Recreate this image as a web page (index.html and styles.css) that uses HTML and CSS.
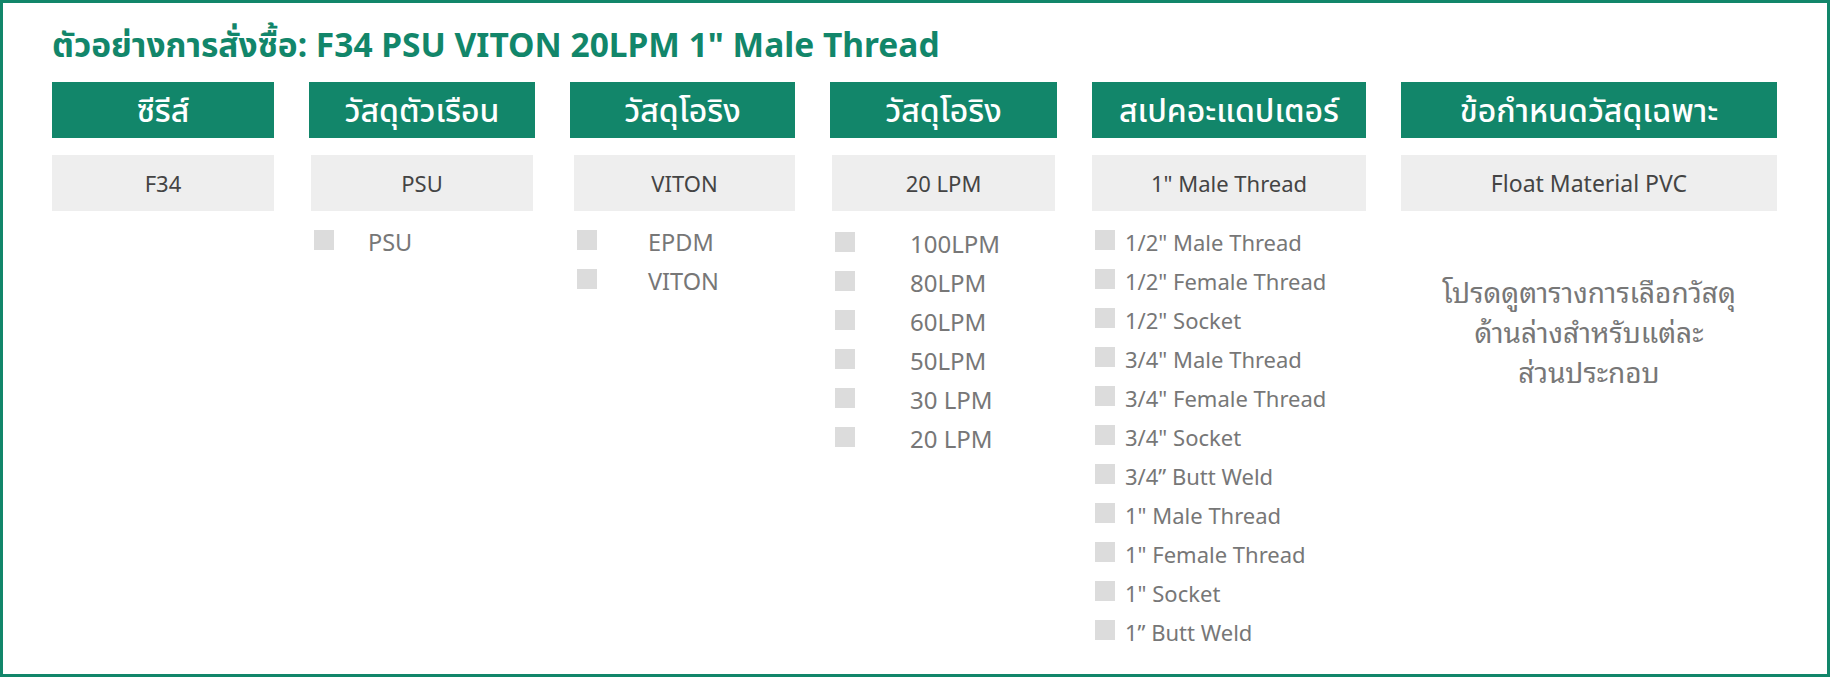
FILE: index.html
```
<!DOCTYPE html>
<html lang="th">
<head>
<meta charset="utf-8">
<title>ตัวอย่างการสั่งซื้อ</title>
<link rel="stylesheet" href="styles.css">
</head>
<body>
<div class="frame">
  <h1 class="title">ตัวอย่างการสั่งซื้อ: F34 PSU VITON 20LPM 1" Male Thread</h1>
  <div class="grid">
    <div class="col c1">
      <div class="head">ซีรีส์</div>
      <div class="val">F34</div>
    </div>
    <div class="col c2">
      <div class="head">วัสดุตัวเรือน</div>
      <div class="val">PSU</div>
      <ul class="opts">
        <li><span class="box"></span><span class="txt">PSU</span></li>
      </ul>
    </div>
    <div class="col c3">
      <div class="head">วัสดุโอริง</div>
      <div class="val">VITON</div>
      <ul class="opts">
        <li><span class="box"></span><span class="txt">EPDM</span></li>
        <li><span class="box"></span><span class="txt">VITON</span></li>
      </ul>
    </div>
    <div class="col c4">
      <div class="head">วัสดุโอริง</div>
      <div class="val">20 LPM</div>
      <ul class="opts">
        <li><span class="box"></span><span class="txt">100LPM</span></li>
        <li><span class="box"></span><span class="txt">80LPM</span></li>
        <li><span class="box"></span><span class="txt">60LPM</span></li>
        <li><span class="box"></span><span class="txt">50LPM</span></li>
        <li><span class="box"></span><span class="txt">30 LPM</span></li>
        <li><span class="box"></span><span class="txt">20 LPM</span></li>
      </ul>
    </div>
    <div class="col c5">
      <div class="head">สเปคอะแดปเตอร์</div>
      <div class="val">1" Male Thread</div>
      <ul class="opts">
        <li><span class="box"></span><span class="txt">1/2" Male Thread</span></li>
        <li><span class="box"></span><span class="txt">1/2" Female Thread</span></li>
        <li><span class="box"></span><span class="txt">1/2" Socket</span></li>
        <li><span class="box"></span><span class="txt">3/4" Male Thread</span></li>
        <li><span class="box"></span><span class="txt">3/4" Female Thread</span></li>
        <li><span class="box"></span><span class="txt">3/4" Socket</span></li>
        <li><span class="box"></span><span class="txt">3/4” Butt Weld</span></li>
        <li><span class="box"></span><span class="txt">1" Male Thread</span></li>
        <li><span class="box"></span><span class="txt">1" Female Thread</span></li>
        <li><span class="box"></span><span class="txt">1" Socket</span></li>
        <li><span class="box"></span><span class="txt">1” Butt Weld</span></li>
      </ul>
    </div>
    <div class="col c6">
      <div class="head">ข้อกำหนดวัสดุเฉพาะ</div>
      <div class="val">Float Material PVC</div>
      <p class="note"><span class="ln">โปรดดูตารางการเลือกวัสดุ</span><span class="ln">ด้านล่างสำหรับแต่ละ</span><span class="ln">ส่วนประกอบ</span></p>
    </div>
  </div>
</div>
</body>
</html>
```

FILE: styles.css
```
html, body {
  margin: 0;
  padding: 0;
  background: #ffffff;
}

body {
  font-family: "Noto Sans", "Noto Sans Thai", "Open Sans", sans-serif;
}

.frame {
  box-sizing: border-box;
  width: 1830px;
  height: 677px;
  border: 3px solid #12866a;
  padding: 20px 49px 0 49px;
}

.title {
  margin: 0;
  height: 43px;
  line-height: 43px;
  font-size: 33.5px;
  font-weight: 700;
  color: #12866a;
  white-space: nowrap;
}

.grid {
  margin-top: 16px;
  display: grid;
  grid-template-columns: 222px 226px 225px 227px 274px 376px;
  column-gap: 35px;
  align-items: start;
}

.head {
  height: 56px;
  line-height: 56px;
  background: #12866a;
  color: #ffffff;
  text-align: center;
  font-size: 32px;
  font-weight: 500;
  white-space: nowrap;
}

.val {
  margin-top: 17px;
  height: 56px;
  line-height: 56px;
  background: #eeeeee;
  color: #444444;
  text-align: center;
  font-size: 22px;
  white-space: nowrap;
}

.c6 .val { font-size: 23px; }
.c2 .val, .c4 .val { margin-left: 2px; margin-right: 2px; }
.c3 .val { margin-left: 4px; }

.opts {
  list-style: none;
  margin: 11px 0 0 0;
  padding: 0;
}

.opts li {
  display: flex;
  align-items: center;
  height: 39px;
  font-size: 22px;
  color: #777777;
  white-space: nowrap;
}

.box {
  flex: none;
  width: 20px;
  height: 20px;
  margin-top: -3px;
  background: #dcdcdc;
}

.c2 .opts li, .c3 .opts li { font-size: 23.5px; }
.c4 .opts li { font-size: 24px; }

.c2 .opts li { padding-left: 5px; }
.c2 .box { margin-right: 34px; }
.c3 .opts li { padding-left: 7px; }
.c3 .box { margin-right: 51px; }
.c4 .opts { margin-top: 13px; }
.c4 .opts li { padding-left: 5px; }
.c4 .box { margin-right: 55px; }
.c5 .opts li { padding-left: 3px; }
.c5 .box { margin-right: 10px; }

.note {
  margin: 60px 0 0 0;
  display: flex;
  flex-direction: column;
  align-items: center;
  font-family: "Noto Sans Thai Looped", "Noto Looped Thai", "Tahoma", "Leelawadee UI", "Loma", "Garuda", "Norasi", "Noto Sans Thai", "Noto Sans", sans-serif;
  font-size: 28px;
  color: #777777;
}

.ln {
  display: block;
  height: 40px;
  line-height: 40px;
  white-space: nowrap;
}
```
